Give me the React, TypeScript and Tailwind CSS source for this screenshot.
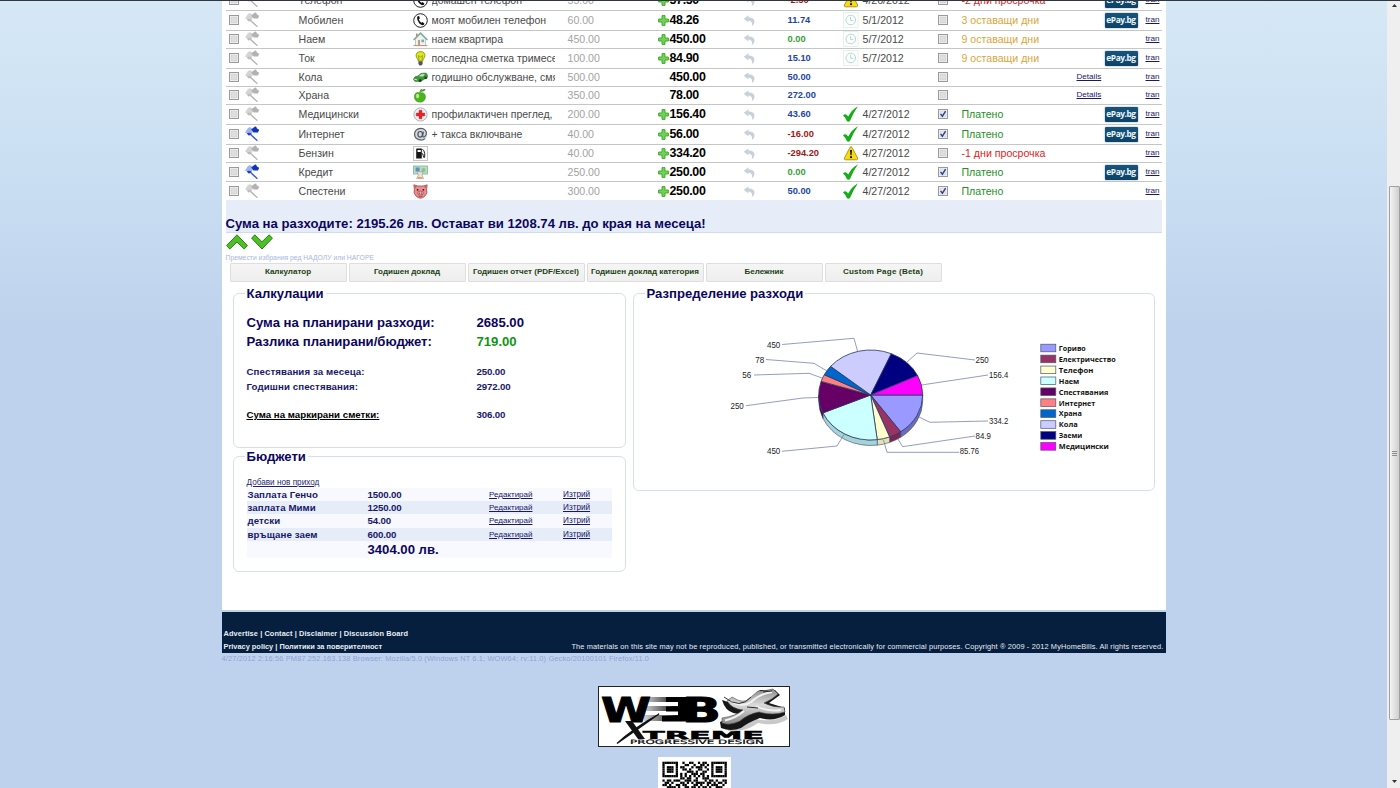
import React from "react";

type IconName = "phone" | "house" | "bulb" | "car" | "apple" | "med" | "at" | "fuel" | "money" | "pig";

function RowIcon({ name }: { name: IconName }) {
  const c = "block h-[15px] w-[15px]";
  switch (name) {
    case "phone":
      return (
        <svg className={c} viewBox="0 0 15 15">
          <circle cx="7.5" cy="7.5" r="6.8" fill="#fff" stroke="#222" strokeWidth="1" />
          <path d="M4.6 3.2 L6.1 2.9 L6.9 5.4 L5.8 6.2 Q6.4 8.4 8.4 9.7 L9.6 9 L11.5 10.8 L10.6 12 Q8.6 12.6 6.4 10.4 Q3.6 7.4 4.1 4.2 Z" fill="#111" />
        </svg>
      );
    case "house":
      return (
        <svg className={c} viewBox="0 0 15 15">
          <path d="M2.5 7 L7.5 2 L12.5 7 V13.5 H2.5 Z" fill="#edf3ee" stroke="#9db8ae" strokeWidth=".7" />
          <path d="M.5 8 L7.5 1 L14.5 8" fill="none" stroke="#7fae9f" strokeWidth="1.5" />
          <rect x="3" y="1.5" width="1.6" height="3" fill="#b98a7a" />
          <rect x="5" y="8" width="2" height="5.5" fill="#c59a76" />
          <rect x="8.4" y="7.6" width="2.6" height="2.6" fill="#7da6c8" />
          <path d="M.5 13.6 H14.5" stroke="#c98d6d" strokeWidth="1" />
        </svg>
      );
    case "bulb":
      return (
        <svg className={c} viewBox="0 0 15 15">
          <path d="M7.5 .6 C4.3 .6 2.9 2.8 3.1 4.9 C3.3 6.9 5 7.8 5.3 10 H9.7 C10 7.8 11.7 6.9 11.9 4.9 C12.1 2.8 10.7 .6 7.5 .6Z" fill="#dcea1e" stroke="#7c8410" strokeWidth=".8" />
          <path d="M6 9.5 L5.5 4.5 L7.5 6 L9.5 4.5 L9 9.5" fill="none" stroke="#8a8d12" strokeWidth=".7" />
          <path d="M5.4 10.3 H9.6 V13 L8.4 14.4 H6.6 L5.4 13Z" fill="#555" />
        </svg>
      );
    case "car":
      return (
        <svg className={c} viewBox="0 0 15 15">
          <path d="M.4 9.2 L2 6.8 L5 6 L8 3.4 L13 3.1 L14.7 5.4 L14 8.2 L11.6 9 L7.3 11.6 L1.8 11.2Z" fill="#3c9a35" stroke="#1f6b24" strokeWidth=".6" />
          <path d="M5.6 6.3 L8.4 4.3 L12 4 L10 6.4Z" fill="#c6e3c4" />
          <path d="M1.2 9.2 L4.2 9.9" stroke="#d9f2d4" strokeWidth=".9" />
          <circle cx="7.2" cy="10.6" r="1.4" fill="#163b1a" />
          <circle cx="12.6" cy="7.8" r="1.2" fill="#163b1a" />
        </svg>
      );
    case "apple":
      return (
        <svg className={c} viewBox="0 0 15 15">
          <path d="M6.9 5.2 C4.6 3.7 1.4 5 1.4 8.6 C1.4 12 4 14.7 6.8 13.9 C9.9 14.8 12.4 12 12.4 8.8 C12.4 5 9.2 3.8 6.9 5.2Z" fill="#4cb51e" stroke="#348d10" strokeWidth=".6" />
          <path d="M6.9 5.2 Q6.8 2.4 8.6 1" fill="none" stroke="#3a5b16" strokeWidth=".9" />
          <path d="M7.4 3.6 Q8.4 .8 12.6 .9 Q11.4 4 7.4 3.6Z" fill="#379612" />
          <ellipse cx="4.6" cy="8" rx="1.6" ry="2.2" fill="#b6ee8c" />
        </svg>
      );
    case "med":
      return (
        <svg className={c} viewBox="0 0 15 15">
          <circle cx="7.5" cy="7.5" r="6.6" fill="#eceef3" stroke="#a9adba" strokeWidth=".9" />
          <path d="M6 3.2 H9 V6 H11.8 V9 H9 V11.8 H6 V9 H3.2 V6 H6Z" fill="#ec2222" stroke="#b81919" strokeWidth=".3" />
        </svg>
      );
    case "at":
      return (
        <svg className={c} viewBox="0 0 15 15">
          <ellipse cx="7.5" cy="7.5" rx="6.8" ry="6.5" fill="#d5d8dd" />
          <path d="M12 11.6 C8.5 14.4 2.2 12.6 1.6 7.8 C1.2 4 4.2 1.4 7.8 1.4 C11.6 1.4 13.8 4 13.3 7 C12.9 9.6 10 10.8 9.6 9.2 L10.4 4.6" fill="none" stroke="#555b66" strokeWidth="1.2" />
          <ellipse cx="7.2" cy="7.3" rx="2.3" ry="2.8" fill="none" stroke="#4c525d" strokeWidth="1.2" />
        </svg>
      );
    case "fuel":
      return (
        <svg className={c} viewBox="0 0 15 15">
          <rect x=".5" y=".5" width="14" height="14" fill="#fafafa" stroke="#c4c4c4" />
          <path d="M3.7 2.6 H8.8 V12.6 H3.2 V3Z" fill="#141414" />
          <rect x="4.6" y="4" width="3.2" height="2" fill="#fff" />
          <path d="M8.8 7.4 Q10.3 7.4 10.2 9.6 Q10.3 12 11.6 11.4 Q12.2 7 10.9 4.8 L9.4 3.2" fill="none" stroke="#222" strokeWidth="1" />
        </svg>
      );
    case "money":
      return (
        <svg className={c} viewBox="0 0 15 15">
          <rect x=".5" y="1" width="14" height="8" fill="#b7dcc2" stroke="#7fb694" strokeWidth=".8" />
          <circle cx="10.5" cy="5" r="2" fill="#84c29a" />
          <rect x="2.6" y="2.5" width="4" height="4" fill="#5e8fc4" />
          <path d="M4 6 L7 7 L10 6.5 L9 10 L10.6 13.6 H3.6 L5.4 10Z" fill="#e9e4da" stroke="#9d8f80" strokeWidth=".6" />
          <rect x="5" y="12" width="4" height="1.6" fill="#e3a25c" />
        </svg>
      );
    case "pig":
      return (
        <svg className={c} viewBox="0 0 15 15">
          <path d="M.8 .8 L5 2 H10 L14.2 .8 L13.6 5 Q15 9 12 12 Q7.5 16.4 3 12 Q0 9 1.4 5Z" fill="#ec8d8d" stroke="#a14b50" strokeWidth=".8" />
          <path d="M1.4 1.4 L4 2.6 L2 4.6Z M13.6 1.4 L11 2.6 L13 4.6Z" fill="#c75b62" />
          <circle cx="4.6" cy="5.8" r=".9" fill="#3a1518" />
          <circle cx="10.4" cy="5.8" r=".9" fill="#3a1518" />
          <ellipse cx="7.5" cy="9" rx="2.8" ry="1.9" fill="#f5b6b4" stroke="#8f3c43" strokeWidth=".7" />
          <circle cx="6.5" cy="9" r=".6" fill="#5c1c22" />
          <circle cx="8.5" cy="9" r=".6" fill="#5c1c22" />
          <path d="M5.4 12 Q7.5 13.4 9.6 12" fill="none" stroke="#7e2c33" strokeWidth=".7" />
        </svg>
      );
  }
}

function Flag({ on }: { on?: boolean }) {
  return (
    <svg className="block h-[16px] w-[16px]" viewBox="0 0 16 16">
      <path d="M4.6 7.5 L12.4 14.8" stroke={on ? "#3355cf" : "#b4b4b4"} strokeWidth="1.3" />
      <path d="M0 6.6 L2.8 2.2 Q4.8 .2 7 2.2 L8 5.4 Q6.6 9 3.4 7.8 Z" fill={on ? "#9db4ee" : "#d4d4d4"} />
      <path d="M1.6 7.6 Q4.2 5.6 6.6 7.8 L4 9.8Z" fill={on ? "#1c3fc4" : "#bdbdbd"} />
      <path d="M6.2 3.4 L9.6 .8 L11 .6 L12 2.4 L14.2 3.8 L13 6.6 L8.6 6.6Z" fill={on ? "#1233bb" : "#b2b2b2"} />
    </svg>
  );
}

function Box({ checked }: { checked?: boolean }) {
  return (
    <svg className="block h-[10px] w-[10px]" viewBox="0 0 10 10">
      <rect x=".5" y=".5" width="9" height="9" fill="#f6f6f6" stroke="#9a9a9a" />
      <rect x="2" y="2" width="6" height="6" fill={checked ? "#e4e8f2" : "#dedede"} stroke="#c3c6ca" strokeWidth=".5" />
      {checked && <path d="M2.6 4.8 L4.4 7.2 L7.6 2.2" fill="none" stroke="#2f3f8f" strokeWidth="1.4" />}
    </svg>
  );
}

function Plus() {
  return (
    <svg className="block h-[11px] w-[11px]" viewBox="0 0 11 11">
      <path d="M4 .6 H7 V4 H10.4 V7 H7 V10.4 H4 V7 H.6 V4 H4Z" fill="#6fd453" stroke="#3aa42a" strokeWidth=".9" />
    </svg>
  );
}

function Undo() {
  return (
    <svg className="block h-[13px] w-[13px]" viewBox="0 0 13 13">
      <path d="M.8 4.8 L5.4 1.2 V3.4 C9.6 3.4 12 5.2 11.4 8.4 Q11 10.6 8.8 12 Q10.2 7.2 5.4 6.6 V8.6Z" fill="#c8d1d9" />
    </svg>
  );
}

type Status = "warn" | "clock" | "check" | "none";

function StatusIcon({ s }: { s: Status }) {
  if (s === "check")
    return (
      <svg className="block h-[16px] w-[16px]" viewBox="0 0 16 16">
        <path d="M0 9.4 Q2 7.4 3.6 8.8 L5.2 10.6 Q8.6 3.6 15 .2 Q10.4 6.4 7 15 Q5.4 16.2 4 15.2 Q2.8 11.6 0 9.4Z" fill="#18ab1a" />
      </svg>
    );
  if (s === "warn")
    return (
      <svg className="block h-[15px] w-[16px]" viewBox="0 0 16 15">
        <path d="M7 1.4 Q8 0 9 1.4 L14.6 12 Q15 13.6 13.4 13.8 H2.4 Q.8 13.6 1.4 12Z" fill="#f7dc10" stroke="#a08c18" strokeWidth=".9" />
        <path d="M7 4 H9 L8.6 9.2 H7.4Z" fill="#1b1b10" />
        <circle cx="8" cy="11.2" r="1.1" fill="#1b1b10" />
      </svg>
    );
  if (s === "clock")
    return (
      <svg className="block h-[16px] w-[16px]" viewBox="0 0 16 16">
        <rect x=".5" y=".5" width="14.5" height="15" fill="#fcfffd" stroke="#e3f1ea" strokeWidth=".9" />
        <circle cx="7.8" cy="8" r="4.8" fill="none" stroke="#b5dccb" strokeWidth="1" />
        <path d="M7.6 4.8 V8.4 H10.4" fill="none" stroke="#b5dccb" strokeWidth="1" />
      </svg>
    );
  return null;
}

function EPay() {
  return (
    <div className="flex h-[15px] w-[33px] items-center justify-center rounded-[1px] bg-linear-to-b from-[#17547d] to-[#0c4267] shadow-[0_0_2px_#8a98a4]">
      <span className="font-['Open_Sans',sans-serif] text-[8.4px] leading-none font-bold tracking-[-0.45px] text-[#eef6fa]">ePay.bg</span>
    </div>
  );
}

type Row = {
  h: string;
  flag?: boolean;
  name: string;
  icon: IconName;
  desc?: string;
  plan: string;
  plus: boolean;
  sum: string;
  diff: string;
  tone: string;
  status: Status;
  date?: string;
  paid?: boolean;
  note?: string;
  noteTone?: string;
  details?: boolean;
  epay?: boolean;
};

const BLUE = "text-[#1f46a5]";
const RED = "text-[#a01818]";
const GREEN = "text-[#35a035]";
const AMBER = "text-[#dba63c]";
const PAID = "text-[#1f8f1f]";
const LATE = "text-[#e01c1c]";

const rows: Row[] = [
  { h: "h-[20px] pb-px", name: "Телефон", icon: "phone", desc: "домашен телефон", plan: "55.00", plus: true, sum: "57.50", diff: "-2.50", tone: RED, status: "warn", date: "4/26/2012", note: "-2 дни просрочка", noteTone: LATE, epay: true },
  { h: "h-[20px] pb-px", name: "Мобилен", icon: "phone", desc: "моят мобилен телефон", plan: "60.00", plus: true, sum: "48.26", diff: "11.74", tone: BLUE, status: "clock", date: "5/1/2012", note: "3 оставащи дни", noteTone: AMBER, epay: true },
  { h: "h-[18px] pb-px", name: "Наем", icon: "house", desc: "наем квартира", plan: "450.00", plus: true, sum: "450.00", diff: "0.00", tone: GREEN, status: "clock", date: "5/7/2012", note: "9 оставащи дни", noteTone: AMBER },
  { h: "h-[20px] pb-px", name: "Ток", icon: "bulb", desc: "последна сметка тримесечие", plan: "100.00", plus: true, sum: "84.90", diff: "15.10", tone: BLUE, status: "clock", date: "5/7/2012", note: "9 оставащи дни", noteTone: AMBER, epay: true },
  { h: "h-[18px] pb-px", name: "Кола", icon: "car", desc: "годишно обслужване, смяна", plan: "500.00", plus: false, sum: "450.00", diff: "50.00", tone: BLUE, status: "none", details: true },
  { h: "h-[18px] pb-px", name: "Храна", icon: "apple", plan: "350.00", plus: false, sum: "78.00", diff: "272.00", tone: BLUE, status: "none", details: true },
  { h: "h-[20px] pb-px", name: "Медицински", icon: "med", desc: "профилактичен преглед, зъби", plan: "200.00", plus: true, sum: "156.40", diff: "43.60", tone: BLUE, status: "check", date: "4/27/2012", paid: true, note: "Платено", noteTone: PAID, epay: true },
  { h: "h-[20px] pb-px", flag: true, name: "Интернет", icon: "at", desc: "+ такса включване", plan: "40.00", plus: true, sum: "56.00", diff: "-16.00", tone: RED, status: "check", date: "4/27/2012", paid: true, note: "Платено", noteTone: PAID, epay: true },
  { h: "h-[18px] pb-px", name: "Бензин", icon: "fuel", plan: "40.00", plus: true, sum: "334.20", diff: "-294.20", tone: RED, status: "warn", date: "4/27/2012", note: "-1 дни просрочка", noteTone: LATE },
  { h: "h-[19px]", flag: true, name: "Кредит", icon: "money", plan: "250.00", plus: true, sum: "250.00", diff: "0.00", tone: GREEN, status: "check", date: "4/27/2012", paid: true, note: "Платено", noteTone: PAID, epay: true },
  { h: "h-[18px]", name: "Спестени", icon: "pig", plan: "300.00", plus: true, sum: "250.00", diff: "50.00", tone: BLUE, status: "check", date: "4/27/2012", paid: true, note: "Платено", noteTone: PAID },
];

function BillRow({ r, last }: { r: Row; last: boolean }) {
  return (
    <div
      className={`grid shrink-0 grid-cols-[19px_54px_114px_19px_123px_103px_12px_73px_45px_55px_20px_75px_24px_115px_28px_41px_16px] items-center text-[10.6px] leading-[16px] whitespace-nowrap text-[#4a4a4a] ${r.h} ${last ? "" : "border-b border-[#c6c6c6]"}`}
    >
      <div className="pl-[3.5px]"><Box /></div>
      <div className="-my-1"><Flag on={r.flag} /></div>
      <div className="-my-1">{r.name}</div>
      <div className="-my-1"><RowIcon name={r.icon} /></div>
      <div className="-my-1 overflow-hidden text-[10.5px]">{r.desc}</div>
      <div className="pl-[13px] text-[#a3a3a3]">{r.plan}</div>
      <div>{r.plus && <Plus />}</div>
      <div className="-my-1 text-[12.4px] font-bold tracking-[-0.32px] text-black">{r.sum}</div>
      <div className="pt-px"><Undo /></div>
      <div className={`text-[9.3px] font-bold ${r.tone}`}>{r.diff}</div>
      <div className="-my-1"><StatusIcon s={r.status} /></div>
      <div>{r.date}</div>
      <div><Box checked={r.paid} /></div>
      <div className={r.noteTone}>{r.note}</div>
      <div className="text-[8.1px] text-[#1a1a6c] underline">{r.details ? "Details" : ""}</div>
      <div className="-my-1">{r.epay && <EPay />}</div>
      <div className="text-[8.1px] text-[#1a1a6c] underline">tran</div>
    </div>
  );
}

const CX = 870.7;
const CY = 395;
const RX = 52;
const RY = 45;
const DEPTH = 5.5;

const slices = [
  { name: "Гориво", v: 334.2, c: "#9999ff", side: "#6c6cbc", w: 27 },
  { name: "Електричество", v: 84.9, c: "#993366", side: "#7a2650", w: 57 },
  { name: "Телефон", v: 85.76, c: "#ffffcc", side: "#e6e2b0", w: 34.5 },
  { name: "Наем", v: 450, c: "#ccffff", side: "#a5d3d6", w: 20.5 },
  { name: "Спестявания", v: 250, c: "#660066", side: "#460046", w: 49.5 },
  { name: "Интернет", v: 56, c: "#ff8080", side: "#c06060", w: 36.5 },
  { name: "Храна", v: 78, c: "#0066cc", side: "#0066cc", w: 23 },
  { name: "Кола", v: 450, c: "#ccccff", side: "#ccccff", w: 19 },
  { name: "Заеми", v: 250, c: "#000080", side: "#000080", w: 23.5 },
  { name: "Медицински", v: 156.4, c: "#ff00ff", side: "#ff00ff", w: 50 },
];

const total = slices.reduce((a, s) => a + s.v, 0);

const leaders = [
  "782,344.5 854,338.3 857.5,351",
  "766,359.5 814,363.3 827,371",
  "754,375 809,373.3 822,378",
  "746,405.7 803,398 818,397.5",
  "782,451.3 837,446 844,434.5",
  "959,452.3 887,452.3 883.5,440",
  "975,436 902.5,446.7 898,439",
  "988,421 930,422.3 919,417",
  "988,375 921.5,385",
  "975,360 917,353 906,363",
];

const labels: [string, number, number, number][] = [
  ["450", 767, 347.5, 13.3],
  ["78", 755.3, 362.8, 9],
  ["56", 742.3, 378.3, 9],
  ["250", 730.5, 409, 13.3],
  ["450", 767, 454.3, 13.3],
  ["250", 975.5, 363, 13.3],
  ["156.4", 989, 378.3, 19.3],
  ["334.2", 989, 424.3, 19.3],
  ["84.9", 975.6, 438.8, 15.3],
  ["85.76", 959.8, 454.2, 19.3],
];

function point(a: number, dy = 0) {
  return `${(CX + RX * Math.cos(a)).toFixed(2)} ${(CY + RY * Math.sin(a) + dy).toFixed(2)}`;
}

function Chart() {
  let acc = 0;
  const parts = slices.map((s) => {
    const a0 = (acc / total) * Math.PI * 2;
    acc += s.v;
    const a1 = (acc / total) * Math.PI * 2;
    return { ...s, a0, a1 };
  });
  return (
    <svg className="block h-[180px] w-[480px]" viewBox="660 305 480 180">
      {parts
        .filter((p) => p.a0 < Math.PI)
        .map((p) => {
          const e = Math.min(p.a1, Math.PI);
          return (
            <path
              key={p.name}
              d={`M${point(p.a0)} A${RX} ${RY} 0 0 1 ${point(e)} L${point(e, DEPTH)} A${RX} ${RY} 0 0 0 ${point(p.a0, DEPTH)}Z`}
              fill={p.side}
              stroke="#3b4a72"
              strokeWidth=".6"
            />
          );
        })}
      {parts.map((p) => (
        <path
          key={p.name}
          d={`M${CX} ${CY} L${point(p.a0)} A${RX} ${RY} 0 0 1 ${point(p.a1)}Z`}
          fill={p.c}
          stroke="#26365f"
          strokeWidth=".8"
        />
      ))}
      {leaders.map((l) => (
        <polyline key={l} points={l} fill="none" stroke="#6674a0" strokeWidth=".7" />
      ))}
      <g fontFamily="Liberation Sans, sans-serif" fontSize="9.4" fill="#222">
        {labels.map(([t, x, y, w], i) => (
          <text key={i} x={x} y={y} textLength={w} lengthAdjust="spacingAndGlyphs">{t}</text>
        ))}
      </g>
      <g fontFamily="Open Sans, sans-serif" fontWeight="700" fontSize="7.6" fill="#111">
        {slices.map((s, i) => (
          <React.Fragment key={s.name}>
            <rect x="1040.8" y={344.2 + i * 10.93} width="15" height="7.6" fill={s.c} stroke="#4b5470" strokeWidth=".7" />
            <text x="1058.8" y={350.9 + i * 10.93} textLength={s.w} lengthAdjust="spacingAndGlyphs">{s.name}</text>
          </React.Fragment>
        ))}
      </g>
    </svg>
  );
}

function Panel({ title, className, children }: { title: string; className: string; children: React.ReactNode }) {
  return (
    <section className={`flex flex-col items-start rounded-[6px] border border-[#d6e0ea] ${className}`}>
      <h2 className="-mt-[9px] ml-[11px] bg-white px-[2px] text-[13.1px] leading-[17px] font-bold text-[#0c0660]">{title}</h2>
      {children}
    </section>
  );
}

const tabs = [
  "Калкулатор",
  "Годишен доклад",
  "Годишен отчет (PDF/Excel)",
  "Годишен доклад категория",
  "Бележник",
  "Custom Page (Beta)",
];

const incomes = [
  ["Заплата Генчо", "1500.00"],
  ["заплата Мими", "1250.00"],
  ["детски", "54.00"],
  ["връщане заем", "600.00"],
];

const qr = [
  "11111110010011001011001111111",
  "10000010001100100110101000001",
  "10111010110001011101001011101",
  "10111010011010001100101011101",
  "10111010000111010011001011101",
  "10000010101001110110001000001",
  "11111110101010101010101111111",
  "00000000110110010011100000000",
  "10110111001110110001011010011",
  "01101000110101011110110101101",
  "11010011011000110100101110010",
  "00111101001101101011010011100",
];

function Qr() {
  return (
    <svg className="block h-[31px] w-[73px]" viewBox="0 0 73 31">
      <rect width="73" height="31" fill="#fff" />
      {qr.map((line, y) =>
        line.split("").map((b, x) =>
          b === "1" ? <rect key={`${x}-${y}`} x={4.4 + x * 2.22} y={4.7 + y * 2.22} width="2.26" height="2.26" fill="#000" /> : null
        )
      )}
    </svg>
  );
}

function Banner() {
  return (
    <svg className="block h-[61px] w-[192px]" viewBox="0 0 192 61">
      <defs>
        <linearGradient id="steel" x1="0" y1="0" x2="0" y2="1">
          <stop offset="0" stopColor="#8d8d8d" />
          <stop offset=".45" stopColor="#dadada" />
          <stop offset="1" stopColor="#8a8a8a" />
        </linearGradient>
        <linearGradient id="fade" x1="0" y1="0" x2="1" y2="0">
          <stop offset="0" stopColor="#fff" />
          <stop offset="1" stopColor="#111" />
        </linearGradient>
      </defs>
      <rect x=".5" y=".5" width="191" height="60" fill="#fff" stroke="#222" />
      <path d="M38 11 H80 V16 H38Z M42 20 H80 V25 H42Z M46 29 H80 V35 H46Z" fill="url(#fade)" />
      <path d="M68 11 H92 V35.5 H64 V30 H80 V25.5 H68 V20.5 H80 V16 H68Z" fill="#000" />
      <g fontFamily="DejaVu Sans, sans-serif" fontWeight="700" fill="#000">
        <text x="3" y="36" fontSize="34.5" stroke="#000" strokeWidth="1" textLength="50" lengthAdjust="spacingAndGlyphs">W</text>
        <text x="84" y="35.5" fontSize="33.5" stroke="#000" strokeWidth="1" textLength="39" lengthAdjust="spacingAndGlyphs">B</text>
        <text x="45" y="52.5" fontSize="11" stroke="#000" strokeWidth=".5" textLength="121" lengthAdjust="spacingAndGlyphs">TREME</text>
      </g>
      <path d="M27 35 L34 35 L47 53 L40 53Z" fill="#111" />
      <path d="M61 28 Q40 43 19 57.5 Q34 43 61 28Z" fill="#111" stroke="#111" strokeWidth="1.2" />
      <text x="32" y="58.2" fontSize="6" fontFamily="DejaVu Sans, sans-serif" fill="#000" stroke="#000" strokeWidth=".2" textLength="134" lengthAdjust="spacingAndGlyphs">PROGRESSIVE DESIGN</text>
      <path d="M130 36 Q146 40 158 33 Q176 37 188 29 L190 33 Q178 41 160 37 Q146 47 130 45Z" fill="#c9c9c9" />
      <path d="M126 19 L124 14 L130 16 Q146 24 153 14 L162 4 L177 4 L182 9 L171 17 L187 22 L187 29 Q176 36 162 32 Q151 36 143 42 Q133 46 123 42 L122 36 L140 28 Q130 27 126 19Z" fill="#171717" />
      <path d="M129 15 L134 11 Q146 19 152 12 L160 5 Q168 5 175 3 L180 8 Q175 13 166 17 Q175 22 186 21 L187 26 Q175 30 161 26 Q150 28 142 35 Q132 40 124 37 L124 32 Q138 30 145 24 Q134 23 129 15Z" fill="url(#steel)" stroke="#4a4a4a" strokeWidth=".6" />
      <path d="M132 15 Q145 22 153 16 Q161 8 174 6 M146 25 Q138 32 127 34.5 M158 20 Q170 26 183 24" fill="none" stroke="#f2f2f2" strokeWidth="1.8" />
      <path d="M126 11 Q142 24 153 11 M165 6 L174 5 M149 21 L160 22" fill="none" stroke="#1a1a1a" strokeWidth=".9" />
    </svg>
  );
}

export default function App() {
  return (
    <div className="flex h-[788px] w-[1400px] overflow-hidden border-t border-[#30363d] bg-[linear-gradient(to_bottom,#d6e8f6_0px,#c9def2_180px,#bfd2ed_330px,#bfd2ed_100%)] font-['Liberation_Sans',Arial,sans-serif]">
      <main className="flex w-[1387px] flex-col items-center">
        <div className="flex h-[609px] w-[944px] flex-col bg-white pr-[4px] pl-[4px]">
          <div className="-mt-[10px] flex flex-col">
            {rows.map((r, i) => (
              <BillRow key={r.name} r={r} last={i === rows.length - 1} />
            ))}
          </div>
          <div className="flex h-[33px] shrink-0 items-end border-b border-[#cfdcec] bg-[#e6edf8] text-[13.13px] leading-[17px] font-bold whitespace-nowrap text-[#0c0660]">
            Сума на разходите: 2195.26 лв. Остават ви 1208.74 лв. до края на месеца!
          </div>
          <div className="flex h-[18px] shrink-0 items-center gap-[3px]">
            <svg className="block h-[16px] w-[22px]" viewBox="0 0 22 16">
              <path d="M.6 11.6 L11 .8 L21.4 11.6 L18.2 15 L11 8 L3.8 15Z" fill="#4cc126" stroke="#2c7d18" strokeWidth="1" />
            </svg>
            <svg className="block h-[16px] w-[22px]" viewBox="0 0 22 16">
              <path d="M.6 4.2 L11 15 L21.4 4.2 L18.2 .8 L11 7.8 L3.8 .8Z" fill="#4cc126" stroke="#2c7d18" strokeWidth="1" />
            </svg>
          </div>
          <div className="h-[12px] shrink-0 pt-[2px] text-[6.8px] leading-[9px] whitespace-nowrap text-[#a8b6df]">Премести избрания ред НАДОЛУ или НАГОРЕ</div>
          <nav className="flex shrink-0 gap-[2px] pl-[4px]">
            {tabs.map((t) => (
              <button
                key={t}
                className={`h-[19px] w-[117px] shrink-0 rounded-[1px] border border-[#dedede] bg-linear-to-b from-[#f5f5f5] to-[#eeeeee] text-[8.05px] leading-none font-bold whitespace-nowrap text-[#1c4215] ${t.startsWith("Custom") ? "tracking-[0.2px]" : ""}`}
              >
                {t}
              </button>
            ))}
          </nav>
          <div className="mt-[11px] flex items-start gap-[7px] pl-[7px]">
            <div className="flex w-[393px] flex-col gap-[8px]">
              <Panel title="Калкулации" className="h-[155px]">
                <div className="mt-[11px] grid grid-cols-[230px_100px] pl-[13px] text-[13.13px] leading-[19px] font-bold whitespace-nowrap text-[#0c0660]">
                  <span>Сума на планирани разходи:</span>
                  <span>2685.00</span>
                  <span>Разлика планирани/бюджет:</span>
                  <span className="text-[#119511]">719.00</span>
                </div>
                <div className="mt-[14px] grid grid-cols-[230px_100px] pl-[13px] text-[9.7px] leading-[14.5px] font-bold whitespace-nowrap text-[#18186a]">
                  <span className="tracking-[0.1px]">Спестявания за месеца:</span>
                  <span className="tracking-[-0.15px]">250.00</span>
                  <span className="tracking-[0.1px]">Годишни спестявания:</span>
                  <span className="tracking-[-0.15px]">2972.00</span>
                  <span className="mt-[14px] text-black underline">Сума на маркирани сметки:</span>
                  <span className="mt-[14px] tracking-[-0.15px]">306.00</span>
                </div>
              </Panel>
              <Panel title="Бюджети" className="h-[116px]">
                <a className="mt-[12px] ml-[13px] text-[8.2px] leading-[11px] whitespace-nowrap text-[#1f1f70] underline">Добави нов приход</a>
                <div className="ml-[13px] flex w-[365px] flex-col text-[9.7px] leading-[13px] font-bold whitespace-nowrap text-[#18186a]">
                  {incomes.map(([n, v], i) => (
                    <div key={n} className={`grid h-[13.2px] grid-cols-[120px_121.5px_74px_49px] items-center pl-px ${i % 2 ? "bg-[#e6edf8]" : "bg-[#f7f9fe]"}`}>
                      <span className="tracking-[0.08px]">{n}</span>
                      <span className="tracking-[-0.15px]">{v}</span>
                      <span className="text-[8px] font-normal underline">Редактирай</span>
                      <span className="text-[8.2px] font-normal underline">Изтрий</span>
                    </div>
                  ))}
                  <div className="h-[17px] bg-[#f7f9fe] pl-[121px] text-[13.13px] leading-[18px] text-[#0c0660]">3404.00 лв.</div>
                </div>
              </Panel>
            </div>
            <Panel title="Разпределение разходи" className="h-[198px] w-[522px]">
              <div className="mt-[3px] ml-[26px]"><Chart /></div>
            </Panel>
          </div>
        </div>
        <footer className="mt-[2px] flex h-[41px] w-[944px] shrink-0 flex-col justify-end bg-[#061f3f] pr-[2px] pl-[2px] text-[7.4px] leading-[13px] whitespace-nowrap text-[#e8edf3]">
          <div className="font-bold tracking-[0.09px]">Advertise | Contact | Disclaimer | Discussion Board</div>
          <div className="flex justify-between">
            <span className="font-bold">Privacy policy | Политики за поверителност</span>
            <span className="tracking-[0.14px]">The materials on this site may not be reproduced, published, or transmitted electronically for commercial purposes. Copyright ® 2009 - 2012 MyHomeBills. All rights reserved.</span>
          </div>
        </footer>
        <div className="h-[33px] w-[944px] shrink-0 text-[7.4px] leading-[12px] tracking-[0.145px] whitespace-nowrap text-[#8ba4d8]">
          4/27/2012 2:16:56 PM87.252.163.138 Browser: Mozilla/5.0 (Windows NT 6.1; WOW64; rv:11.0) Gecko/20100101 Firefox/11.0
        </div>
        <Banner />
        <div className="mt-[10px] pl-[2px]"><Qr /></div>
      </main>
      <aside className="flex w-[13px] flex-col items-center bg-[#efefef] pl-px">
        <svg className="mt-[3px] block h-[3px] w-[5px]" viewBox="0 0 5 3"><path d="M0 3 L2.5 0 L5 3Z" fill="#333" /></svg>
        <div className="mt-[179px] flex h-[534px] w-[11px] items-center justify-center rounded-[1px] border border-[#a0a0a0] bg-linear-to-r from-[#f4f4f4] to-[#cfcfcf]">
          <svg className="block h-[5px] w-[5px]" viewBox="0 0 5 5"><path d="M0 .5 H5 M0 2.5 H5 M0 4.5 H5" stroke="#777" strokeWidth=".8" /></svg>
        </div>
        <svg className="mt-[60px] block h-[3px] w-[5px]" viewBox="0 0 5 3"><path d="M0 0 L2.5 3 L5 0Z" fill="#333" /></svg>
      </aside>
    </div>
  );
}
